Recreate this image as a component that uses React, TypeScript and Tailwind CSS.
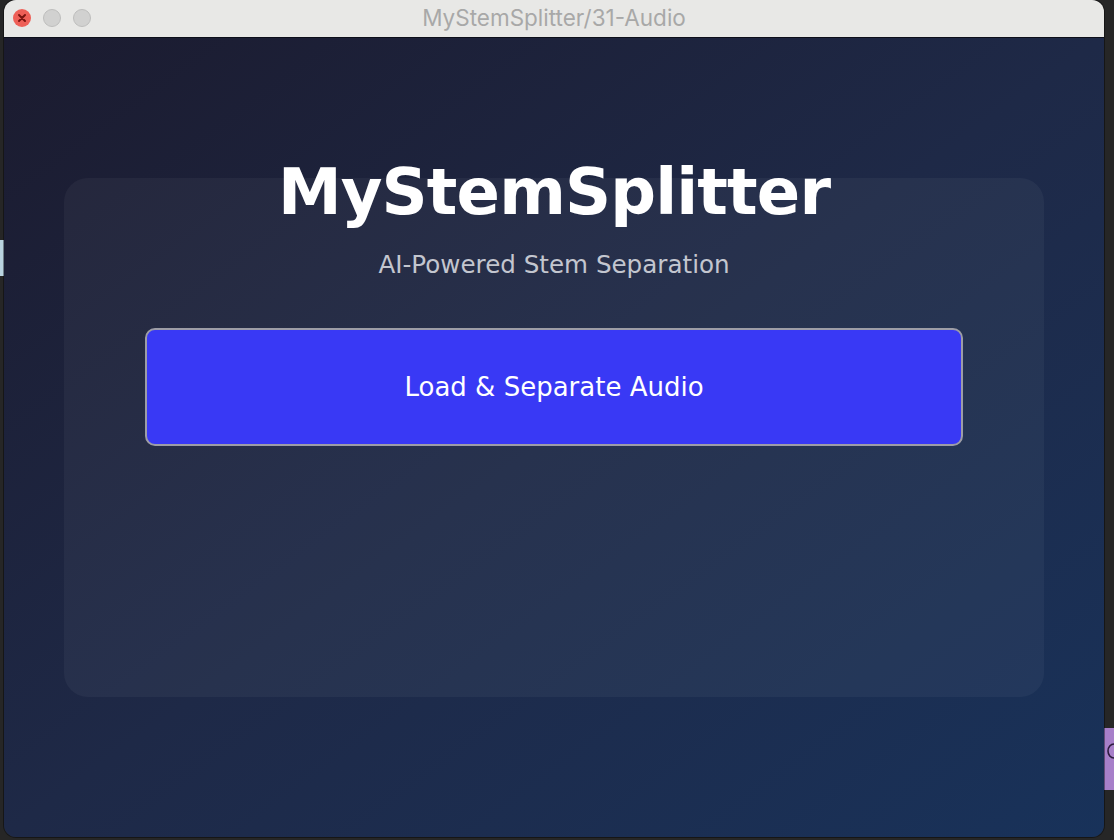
export default function App() {
  return (
    <div className="w-[1114px] h-[840px] bg-[#262626] relative overflow-hidden">
      {/* desktop slivers behind the window */}
      <div className="absolute left-0 top-[240px] w-[4px] h-[36px] bg-[#b9d3df]" />
      <div className="absolute left-[1104px] top-[728px] w-[10px] h-[62px] bg-[#a77fc9]">
        <svg width="10" height="62" viewBox="0 0 10 62" className="block">
          <path d="M10 16 A6 7 0 0 0 4 23 A6 7 0 0 0 10 30" stroke="#2e1c40" strokeWidth="1.6" fill="none" />
        </svg>
      </div>

      {/* window */}
      <div className="absolute left-[4px] top-0 w-[1100px] h-[837px] rounded-[12px] overflow-hidden flex flex-col shadow-[0_0_0_1px_rgba(0,0,0,0.4)]">
        {/* title bar */}
        <div className="h-[38px] bg-[#e8e8e6] relative flex items-center justify-center border-b border-[#0d0f1a]">
          <div className="absolute left-[9px] top-[9px] flex gap-[12px]">
            <div className="w-[18px] h-[18px] rounded-full bg-[#ee5f57] flex items-center justify-center">
              <svg width="10" height="10" viewBox="0 0 10 10">
                <path d="M2 2 L8 8 M8 2 L2 8" stroke="#7a1410" strokeWidth="2" strokeLinecap="round" />
              </svg>
            </div>
            <div className="w-[18px] h-[18px] rounded-full bg-[#d1d1d0] border border-[#bdbdbc]" />
            <div className="w-[18px] h-[18px] rounded-full bg-[#d1d1d0] border border-[#bdbdbc]" />
          </div>
          <span className="text-[22.5px] text-[#a8a8a8] font-['Inter',sans-serif] leading-none">
            MyStemSplitter/31-Audio
          </span>
        </div>

        {/* content */}
        <div className="flex-1 bg-gradient-to-br from-[#1b1b2f] via-[#1e2947] to-[#18325a] px-[60px] py-[140px] flex">
          <div className="flex-1 rounded-[24px] bg-white/[0.045] flex flex-col items-center font-['DejaVu_Sans',sans-serif]">
            <h1 className="-mt-[26px] text-[64px] font-bold text-white leading-[80px] tracking-[-0.85px]">MyStemSplitter</h1>
            <p className="mt-[17px] text-[24.6px] text-[#c3c6cf] leading-[32px]">AI-Powered Stem Separation</p>
            <button className="mt-[47px] w-[818px] h-[118px] rounded-[10px] bg-[#3939f5] border-2 border-[#9d9da6] text-white text-[26px] flex items-center justify-center">
              Load &amp; Separate Audio
            </button>
          </div>
        </div>
      </div>
    </div>
  );
}
